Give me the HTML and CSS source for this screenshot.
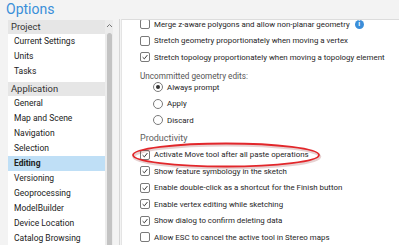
FILE: index.html
```html
<!DOCTYPE html>
<html>
<head>
<meta charset="utf-8">
<link rel="stylesheet" href="styles.css">
</head>
<body>
<div class="window">
  <div class="title">Options</div>
  <div class="body">
    <div class="sidebar">
      <div class="list">
        <div class="group">Project</div>
        <div class="item">Current Settings</div>
        <div class="item">Units</div>
        <div class="item">Tasks</div>
        <div class="spacer"></div>
        <div class="group">Application</div>
        <div class="item">General</div>
        <div class="item">Map and Scene</div>
        <div class="item">Navigation</div>
        <div class="item">Selection</div>
        <div class="item selected">Editing</div>
        <div class="item">Versioning</div>
        <div class="item">Geoprocessing</div>
        <div class="item">ModelBuilder</div>
        <div class="item">Device Location</div>
        <div class="item">Catalog Browsing</div>
      </div>
      <div class="scrollbar">
        <svg class="caret" width="7" height="5" viewBox="0 0 7 5"><path d="M1 4 L3.5 1.5 L6 4" fill="none" stroke="#777" stroke-width="1"/></svg>
        <div class="thumb"></div>
      </div>
    </div>
    <div class="divider"></div>
    <div class="main">
      <div class="content">
        <div class="row"><span class="cb"></span><span class="txt">Merge z-aware polygons and allow non-planar geometry</span><span class="info">i</span></div>
        <div class="row"><span class="cb"></span><span class="txt">Stretch geometry proportionately when moving a vertex</span></div>
        <div class="row"><span class="cb checked"><svg viewBox="0 0 10 10"><path d="M2 5.2 L4.2 7.3 L8 2.6" fill="none" stroke="#333" stroke-width="1.2"/></svg></span><span class="txt">Stretch topology proportionately when moving a topology element</span></div>
        <div class="label">Uncommitted geometry edits:</div>
        <div class="row radio-row"><span class="rb on"></span><span class="txt">Always prompt</span></div>
        <div class="row radio-row"><span class="rb"></span><span class="txt">Apply</span></div>
        <div class="row radio-row"><span class="rb"></span><span class="txt">Discard</span></div>
        <div class="section">Productivity</div>
        <div class="row"><span class="cb checked"><svg viewBox="0 0 10 10"><path d="M2 5.2 L4.2 7.3 L8 2.6" fill="none" stroke="#333" stroke-width="1.2"/></svg></span><span class="txt">Activate Move tool after all paste operations</span></div>
        <div class="row"><span class="cb checked"><svg viewBox="0 0 10 10"><path d="M2 5.2 L4.2 7.3 L8 2.6" fill="none" stroke="#333" stroke-width="1.2"/></svg></span><span class="txt">Show feature symbology in the sketch</span></div>
        <div class="row"><span class="cb checked"><svg viewBox="0 0 10 10"><path d="M2 5.2 L4.2 7.3 L8 2.6" fill="none" stroke="#333" stroke-width="1.2"/></svg></span><span class="txt">Enable double-click as a shortcut for the Finish button</span></div>
        <div class="row"><span class="cb checked"><svg viewBox="0 0 10 10"><path d="M2 5.2 L4.2 7.3 L8 2.6" fill="none" stroke="#333" stroke-width="1.2"/></svg></span><span class="txt">Enable vertex editing while sketching</span></div>
        <div class="row"><span class="cb checked"><svg viewBox="0 0 10 10"><path d="M2 5.2 L4.2 7.3 L8 2.6" fill="none" stroke="#333" stroke-width="1.2"/></svg></span><span class="txt">Show dialog to confirm deleting data</span></div>
        <div class="row"><span class="cb"></span><span class="txt">Allow ESC to cancel the active tool in Stereo maps</span></div>
      </div>
      <svg class="highlight" width="200" height="32" viewBox="0 0 200 32">
        <ellipse cx="100" cy="16.5" rx="93" ry="11.5" fill="none" stroke="rgba(120,0,0,0.18)" stroke-width="3" transform="translate(0.8,1)"/>
        <ellipse cx="100" cy="16" rx="93" ry="11.5" fill="none" stroke="#e2272b" stroke-width="1.8"/>
      </svg>
    </div>
  </div>
</div>
</body>
</html>
```

FILE: styles.css
```css
* { box-sizing: border-box; }
html, body { margin: 0; padding: 0; }
body {
  width: 399px;
  height: 245px;
  overflow: hidden;
  background: #f3f3f3;
  font-family: Roboto, "Noto Sans", sans-serif;
  color: #1e1e1e;
}
.window {
  display: flex;
  flex-direction: column;
  height: 245px;
}
.title {
  height: 19px;
  padding-left: 6px;
  font-size: 14px;
  line-height: 18px;
  color: #3a8fd9;
}
.body {
  display: flex;
  flex: 1;
  min-height: 0;
}
.sidebar {
  display: flex;
  margin-left: 8px;
  margin-top: 1px;
  width: 105px;
  background: #fff;
}
.list {
  flex: 1;
  overflow: hidden;
}
.group {
  height: 14px;
  line-height: 14px;
  padding-left: 3px;
  font-size: 9.4px;
  background: #e6e6e6;
  color: #333;
}
.spacer { height: 3px; }
.item {
  height: 15px;
  line-height: 15px;
  padding-left: 6px;
  font-size: 8.5px;
  color: #222;
}
.item.selected {
  background: #bfdff6;
  font-weight: bold;
}
.scrollbar {
  width: 8px;
  background: #ececec;
  display: flex;
  flex-direction: column;
  align-items: center;
}
.caret { margin-top: 3px; }
.thumb {
  margin-top: 5px;
  width: 5px;
  flex: 1;
  background: #c3c3c3;
  border-radius: 3px 3px 0 0;
}
.divider {
  width: 1px;
  margin-left: 6px;
  margin-right: 1px;
  background: #d6d6d6;
}
.main {
  flex: 1;
  position: relative;
  background: #fff;
  border-top: 1px solid #dcdcdc;
  border-left: 1px solid #e4e4e4;
  overflow: hidden;
}
.content {
  margin-top: -4px;
  padding-left: 18px;
}
.row {
  display: flex;
  align-items: center;
  height: 16.5px;
  font-size: 7.9px;
  white-space: nowrap;
}
.cb {
  flex: none;
  width: 10px;
  height: 10px;
  border: 1px solid #7a7a7a;
  border-radius: 2px;
  background: #fff;
  margin-right: 4px;
  display: flex;
}
.cb svg { width: 100%; height: 100%; }
.info {
  flex: none;
  margin-left: 5px;
  width: 9px;
  height: 9px;
  border-radius: 50%;
  background: #3b8ed9;
  color: #fff;
  font-size: 7px;
  font-weight: bold;
  line-height: 9px;
  text-align: center;
}
.label {
  height: 13.5px;
  line-height: 20px;
  font-size: 8.2px;
  color: #555;
}
.radio-row { padding-left: 13px; }
.rb {
  flex: none;
  width: 10px;
  height: 10px;
  border: 1px solid #7a7a7a;
  border-radius: 50%;
  margin-right: 4px;
  display: flex;
  align-items: center;
  justify-content: center;
}
.rb.on::after {
  content: "";
  width: 4px;
  height: 4px;
  border-radius: 50%;
  background: #333;
}
.section {
  height: 18px;
  line-height: 18px;
  font-size: 9px;
  color: #5e5e5e;
}
.highlight {
  position: absolute;
  left: 4px;
  top: 119px;
}
```
